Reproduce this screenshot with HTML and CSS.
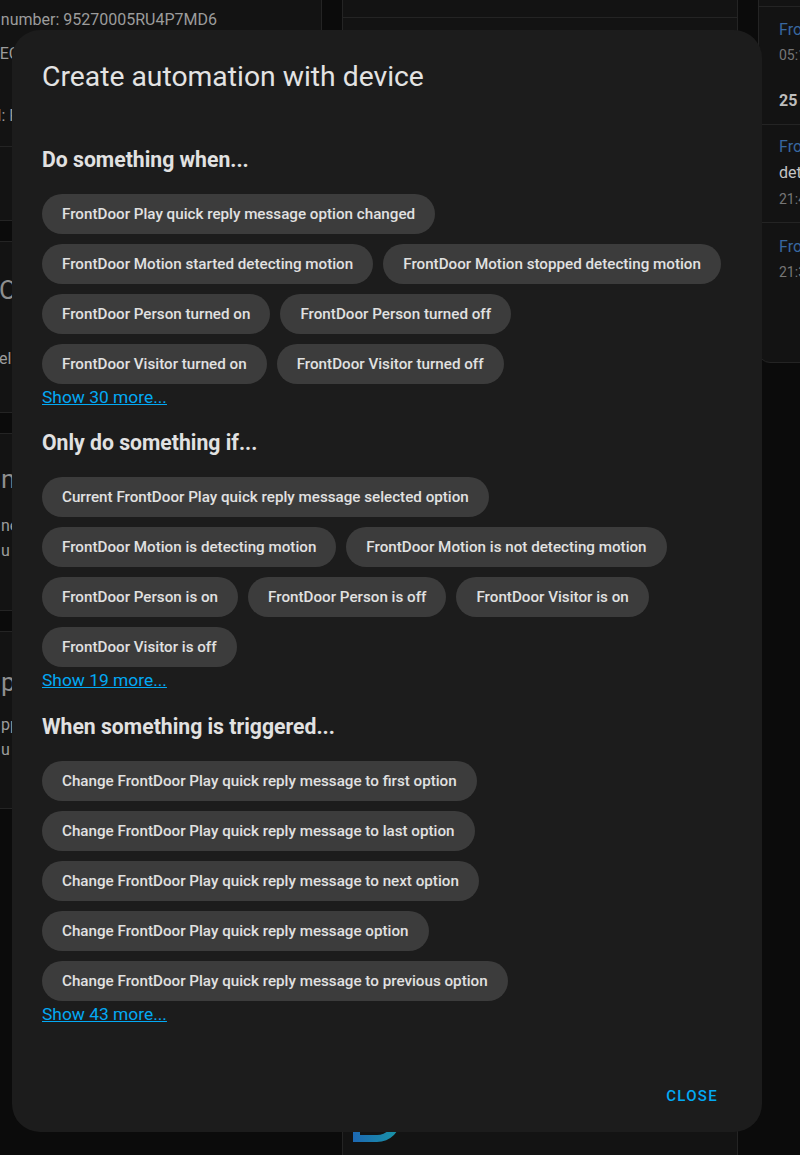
FILE: index.html
```html
<!DOCTYPE html>
<html lang="en">
<head>
<meta charset="utf-8">
<title>Device</title>
<link rel="stylesheet" href="styles.css">
</head>
<body>
<div class="page">
  <div class="col col-left">
    <section class="card card-info">
      <div class="info-line">Serial number: 95270005RU4P7MD6</div>
      <div class="info-line">MAC: EC:71:DB:3A:21:9F</div>
      <div class="info-line info-gap">Model: Floodlight Cam</div>
      <div class="card-actions"><span class="action">MQTT INFO</span></div>
    </section>
    <section class="card card-block b2">
      <div class="block-title">OIL Controls</div>
      <div class="block-line">el Doorbell chime</div>
    </section>
    <section class="card card-block b3">
      <div class="block-title">nsors</div>
      <div class="block-line">ne FrontDoor Battery</div>
      <div class="block-line">u FrontDoor Signal</div>
    </section>
    <section class="card card-block b4">
      <div class="block-title">pnfiguration</div>
      <div class="block-line">pp FrontDoor Snapshot</div>
      <div class="block-line">u FrontDoor Detection</div>
    </section>
  </div>

  <div class="col col-mid">
    <section class="card card-mid">
      <div class="mid-head"></div>
      <div class="mid-body">
        <svg class="logo" width="48" height="48" viewBox="0 0 48 48" aria-hidden="true">
          <defs>
            <linearGradient id="lg" x1="0" y1="0" x2="1" y2="0">
              <stop offset="0" stop-color="#1d68b3"/>
              <stop offset="1" stop-color="#1897a6"/>
            </linearGradient>
          </defs>
          <path fill="url(#lg)" fill-rule="evenodd" d="M0 0H24A24 24 0 0 1 24 48H0Z M7 7H24A17 17 0 0 1 24 41H7Z"/>
        </svg>
      </div>
    </section>
  </div>

  <div class="col col-right">
    <section class="card card-log">
      <div class="log-head"></div>
      <div class="log-entry e1">
        <div class="log-name">FrontDoor Motion</div>
        <div class="log-time">05:12:44 - 3 hours ago</div>
        <div class="log-date">25 March</div>
      </div>
      <div class="log-entry e2">
        <div class="log-name">FrontDoor Person</div>
        <div class="log-text">detected a person</div>
        <div class="log-time">21:40:12 - 11 hours ago</div>
      </div>
      <div class="log-entry e3">
        <div class="log-name">FrontDoor Visitor</div>
        <div class="log-time">21:39:58 - 11 hours ago</div>
      </div>
    </section>
  </div>
</div>

<div class="dialog" role="dialog" aria-labelledby="dlg-title">
  <h2 class="dialog-title" id="dlg-title">Create automation with device</h2>
  <div class="dialog-content">
    <section class="group g1">
      <h3 class="group-title">Do something when...</h3>
      <div class="chips">
        <button class="chip">FrontDoor Play quick reply message option changed</button>
        <button class="chip">FrontDoor Motion started detecting motion</button>
        <button class="chip">FrontDoor Motion stopped detecting motion</button>
        <button class="chip">FrontDoor Person turned on</button>
        <button class="chip">FrontDoor Person turned off</button>
        <button class="chip">FrontDoor Visitor turned on</button>
        <button class="chip">FrontDoor Visitor turned off</button>
      </div>
      <a class="more" href="#">Show 30 more...</a>
    </section>
    <section class="group g2">
      <h3 class="group-title">Only do something if...</h3>
      <div class="chips">
        <button class="chip">Current FrontDoor Play quick reply message selected option</button>
        <button class="chip">FrontDoor Motion is detecting motion</button>
        <button class="chip">FrontDoor Motion is not detecting motion</button>
        <button class="chip">FrontDoor Person is on</button>
        <button class="chip">FrontDoor Person is off</button>
        <button class="chip">FrontDoor Visitor is on</button>
        <button class="chip">FrontDoor Visitor is off</button>
      </div>
      <a class="more" href="#">Show 19 more...</a>
    </section>
    <section class="group g3">
      <h3 class="group-title">When something is triggered...</h3>
      <div class="chips">
        <button class="chip">Change FrontDoor Play quick reply message to first option</button>
        <button class="chip">Change FrontDoor Play quick reply message to last option</button>
        <button class="chip">Change FrontDoor Play quick reply message to next option</button>
        <button class="chip">Change FrontDoor Play quick reply message option</button>
        <button class="chip">Change FrontDoor Play quick reply message to previous option</button>
      </div>
      <a class="more" href="#">Show 43 more...</a>
    </section>
  </div>
  <div class="dialog-actions">
    <button class="close-btn">Close</button>
  </div>
</div>
</body>
</html>
```

FILE: styles.css
```css
* { box-sizing: border-box; }

html, body {
  margin: 0;
  height: 100%;
}

body {
  background: #0b0b0b;
  font-family: Roboto, "Noto Sans", "Liberation Sans", sans-serif;
  overflow: hidden;
  position: relative;
}

/* ---------- background page ---------- */
.page {
  display: flex;
  gap: 20px;
  margin-left: -60px;
  height: 1155px;
  align-items: flex-start;
}

.col {
  display: flex;
  flex-direction: column;
  gap: 20px;
  flex: none;
}

.col-left { width: 382px; }
.col-mid { width: 396px; }
.col-right { width: 420px; }

.card {
  background: #131313;
  border: 1px solid #242424;
  border-radius: 12px;
  color: #9c9c9c;
  overflow: hidden;
}

.card-info {
  margin-top: -20px;
  height: 241px;
  padding: 27px 16px 0;
}

.info-line {
  font-size: 16px;
  line-height: 24px;
  margin-bottom: 10px;
  white-space: nowrap;
}

.info-gap { margin-top: 38px; margin-bottom: 0; }

.card-actions {
  margin: 18px -16px 0;
  border-top: 1px solid #242424;
  padding: 12px 16px 12px 120px;
}

.action {
  color: #2f6aa0;
  font-size: 14px;
  font-weight: 500;
}

.card-block { padding: 0 16px 0 54px; }
.b2 { height: 172px; padding-top: 32px; padding-left: 58px; }
.b3 { height: 178px; padding-top: 29px; padding-left: 60px; }
.b4 { height: 178px; padding-top: 34px; padding-left: 60px; }

.block-title {
  font-size: 26px;
  line-height: 32px;
  color: #8e8e8e;
  white-space: nowrap;
}

.block-line {
  font-size: 16px;
  line-height: 24px;
  white-space: nowrap;
}

.b2 .block-line { margin-top: 41px; }
.b3 .block-line:nth-child(2) { margin-top: 19px; }
.b3 .block-line:nth-child(3) { margin-top: 1px; }
.b4 .block-line:nth-child(2) { margin-top: 15px; }
.b4 .block-line:nth-child(3) { margin-top: 1px; }

.card-mid {
  margin-top: -20px;
  height: 1200px;
  border-radius: 12px;
}

.mid-head {
  height: 37px;
  border-bottom: 1px solid #242424;
}

.mid-body {
  padding: 1076px 0 0 10px;
}

.logo { display: block; }

.card-log {
  margin-top: -20px;
  height: 383px;
  border-radius: 0 0 0 12px;
}

.log-head {
  height: 26px;
  border-bottom: 1px solid #242424;
}

.log-entry {
  padding: 0 20px;
  border-bottom: 1px solid #242424;
  white-space: nowrap;
}

.log-entry:last-child { border-bottom: 0; }

.e1 { padding-top: 11px; padding-bottom: 11px; }
.e2 { padding-top: 10px; padding-bottom: 12px; }
.e3 { padding-top: 12px; }

.log-name {
  color: #3867a0;
  font-size: 16px;
  line-height: 24px;
}

.log-text {
  color: #c4c4c4;
  font-size: 16px;
  line-height: 24px;
  margin-top: 2px;
}

.log-time {
  color: #767676;
  font-size: 14px;
  line-height: 22px;
  margin-top: 2px;
}

.e2 .log-time { margin-top: 3px; }

.log-date {
  color: #bdbdbd;
  font-size: 16px;
  font-weight: 700;
  line-height: 24px;
  margin-top: 23px;
}

/* ---------- dialog ---------- */
.dialog {
  position: absolute;
  left: 12px;
  top: 30px;
  width: 750px;
  height: 1102px;
  background: #1c1c1c;
  border-radius: 28px;
  display: flex;
  flex-direction: column;
  padding: 31px 30px 18px;
  color: #e1e1e1;
}

.dialog-title {
  margin: 0;
  font-size: 28.3px;
  font-weight: 400;
  line-height: 32px;
  color: #e3e3e3;
}

.group-title {
  margin: 24px 0 22px;
  font-size: 21.2px;
  line-height: 24px;
  font-weight: 700;
  color: #e1e1e1;
}

.g1 .group-title { margin-top: 55px; }
.g3 .group-title { margin-top: 25px; }

.chips {
  display: flex;
  flex-wrap: wrap;
  gap: 10px;
}

.chip {
  height: 40px;
  border: 0;
  border-radius: 20px;
  padding: 0 20px;
  background: #3c3c3c;
  color: #e1e1e1;
  font-family: Roboto, "Noto Sans", sans-serif;
  font-size: 15.2px;
  font-weight: 500;
  line-height: 40px;
  white-space: nowrap;
  cursor: pointer;
}

.more {
  display: block;
  width: max-content;
  margin-top: 3px;
  font-size: 17.4px;
  line-height: 20px;
  color: #03a9f4;
  text-decoration: underline;
}

.dialog-actions {
  margin-top: auto;
  display: flex;
  justify-content: flex-end;
}

.close-btn {
  height: 36px;
  margin-right: 6px;
  padding: 0 8px;
  border: 0;
  background: none;
  color: #03a9f4;
  font-family: Roboto, "Noto Sans", sans-serif;
  font-size: 15px;
  font-weight: 500;
  letter-spacing: 1.3px;
  text-transform: uppercase;
  cursor: pointer;
}
```
